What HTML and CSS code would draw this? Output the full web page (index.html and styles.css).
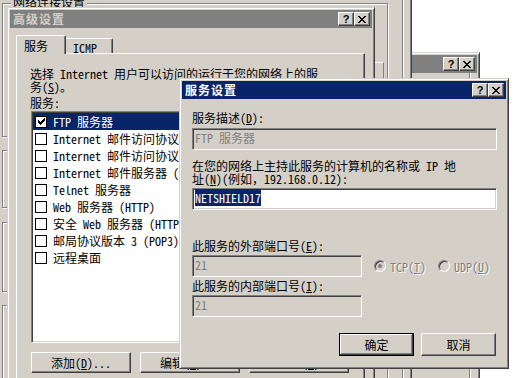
FILE: index.html
```html
<!DOCTYPE html>
<html lang="zh-CN">
<head>
    <meta charset="UTF-8">
    <title>服务设置</title>
    <link rel="stylesheet" href="styles.css">
</head>
<body>
    <!-- 右侧后面的窗口 (标题文字被遮住) -->
    <div class="win w-side">
        <div class="titlebar inactive">
            <span class="caption"></span>
            <span class="tbtn help">?</span>
            <span class="tbtn close"><svg width="8" height="7" viewBox="0 0 8 7" shape-rendering="crispEdges"><path d="M0 0h2v1h-2zM6 0h2v1h-2zM1 1h2v1h-2zM5 1h2v1h-2zM2 2h4v1h-4zM3 3h2v1h-2zM2 4h4v1h-4zM1 5h2v1h-2zM5 5h2v1h-2zM0 6h2v1h-2zM6 6h2v1h-2z"/></svg></span>
        </div>
        <div class="side-body"><div class="side-line"></div></div>
    </div>

    <!-- 网络连接设置 (最底层对话框) -->
    <div class="win w-net">
        <div class="titlebar inactive"><span class="caption"></span></div>
        <div class="net-body">
            <div class="net-groups">
                <div class="group g1">
                    <span class="group-label">网络连接设置</span>
                    <div class="g1-box"></div>
                </div>
                <div class="group g2"></div>
                <div class="group g3"></div>
                <div class="group g4"></div>
            </div>
            <div class="net-edge"></div>
        </div>
    </div>

    <!-- 高级设置 -->
    <div class="win w-adv">
        <div class="titlebar inactive">
            <span class="caption">高级设置</span>
            <span class="tbtn help">?</span>
            <span class="tbtn close"><svg width="8" height="7" viewBox="0 0 8 7" shape-rendering="crispEdges"><path d="M0 0h2v1h-2zM6 0h2v1h-2zM1 1h2v1h-2zM5 1h2v1h-2zM2 2h4v1h-4zM3 3h2v1h-2zM2 4h4v1h-4zM1 5h2v1h-2zM5 5h2v1h-2zM0 6h2v1h-2zM6 6h2v1h-2z"/></svg></span>
        </div>
        <div class="tabs">
            <div class="tab active">服务</div>
            <div class="tab">ICMP</div>
        </div>
        <div class="tabpanel">
            <p class="hint">选择 Internet 用户可以访问的运行于您的网络上的服<br>务(<u>S</u>)。</p>
            <div class="label">服务:</div>
            <ul class="listbox">
                <li class="selected"><span class="chk checked"><svg width="7" height="7" viewBox="0 0 7 7" shape-rendering="crispEdges"><path d="M6 0h1v3h-1zM5 1h1v3h-1zM4 2h1v3h-1zM3 3h1v3h-1zM2 4h1v3h-1zM1 3h1v3h-1zM0 2h1v3h-1z"/></svg></span>FTP 服务器</li>
                <li><span class="chk"></span>Internet 邮件访问协议版本 3 (IMAP3)</li>
                <li><span class="chk"></span>Internet 邮件访问协议版本 4 (IMAP4)</li>
                <li><span class="chk"></span>Internet 邮件服务器 (SMTP)</li>
                <li><span class="chk"></span>Telnet 服务器</li>
                <li><span class="chk"></span>Web 服务器 (HTTP)</li>
                <li><span class="chk"></span>安全 Web 服务器 (HTTPS)</li>
                <li><span class="chk"></span>邮局协议版本 3 (POP3)</li>
                <li><span class="chk"></span>远程桌面</li>
            </ul>
            <div class="btnrow">
                <button class="btn wide">添加(<u>D</u>)...</button>
                <button class="btn wide">编辑(<u>T</u>)...</button>
                <button class="btn wide">删除(<u>E</u>)</button>
            </div>
        </div>
    </div>

    <!-- 服务设置 -->
    <div class="win w-svc">
        <div class="titlebar">
            <span class="caption">服务设置</span>
            <span class="tbtn help">?</span>
            <span class="tbtn close"><svg width="8" height="7" viewBox="0 0 8 7" shape-rendering="crispEdges"><path d="M0 0h2v1h-2zM6 0h2v1h-2zM1 1h2v1h-2zM5 1h2v1h-2zM2 2h4v1h-4zM3 3h2v1h-2zM2 4h4v1h-4zM1 5h2v1h-2zM5 5h2v1h-2zM0 6h2v1h-2zM6 6h2v1h-2z"/></svg></span>
        </div>
        <div class="svc-body">
            <div class="label">服务描述(<u>D</u>):</div>
            <div class="edit full disabled first">FTP 服务器</div>
            <div class="label two">在您的网络上主持此服务的计算机的名称或 IP 地<br>址(<u>N</u>)(例如，192.168.0.12):</div>
            <div class="edit full host"><span class="sel">NETSHIELD17</span></div>
            <div class="label ext">此服务的外部端口号(<u>E</u>):</div>
            <div class="port-row">
                <div class="edit port disabled">21</div>
                <label class="radio-item"><span class="radio on"></span><span>TCP(<u>T</u>)</span></label>
                <label class="radio-item"><span class="radio"></span><span>UDP(<u>U</u>)</span></label>
            </div>
            <div class="label int">此服务的内部端口号(<u>I</u>):</div>
            <div class="edit port disabled last">21</div>
            <div class="actions">
                <button class="btn default">确定</button>
                <button class="btn">取消</button>
            </div>
        </div>
    </div>
</body>
</html>
```

FILE: styles.css
```css
* {
    box-sizing: border-box;
}
html, body {
    margin: 0;
    padding: 0;
}
body {
    position: relative;
    width: 520px;
    height: 378px;
    overflow: hidden;
    background: #fff;
    font-family: "Noto Sans Mono CJK SC", "Noto Sans CJK SC", sans-serif;
    font-size: 12px;
    line-height: 13px;
    color: #000;
}
u {
    text-decoration: underline;
    text-underline-offset: 1px;
}

/* windows */
.win {
    position: absolute;
    display: flex;
    flex-direction: column;
    padding: 2px;
    background: #d4d0c8;
    border: 1px solid;
    border-color: #d4d0c8 #404040 #404040 #d4d0c8;
    box-shadow: inset 1px 1px #fff, inset -1px -1px #808080;
}
.w-side { left: 300px; top: 52px; width: 180px; height: 340px; }
.w-net  { left: -6px; top: -30px; width: 418px; height: 420px; }
.w-adv  { left: 7px; top: 7px; width: 368px; height: 400px; }
.w-svc  { left: 179px; top: 78px; width: 330px; height: 291px; }

.titlebar {
    display: flex;
    align-items: center;
    flex: none;
    height: 18px;
    padding: 0 2px 0 3px;
    background: #0a246a;
    color: #fff;
    font-weight: bold;
    line-height: 18px;
}
.titlebar.inactive {
    background: #808080;
    color: #d4d0c8;
}
.caption {
    flex: 1;
    white-space: nowrap;
    letter-spacing: 1px;
}
.tbtn {
    display: flex;
    align-items: center;
    justify-content: center;
    width: 16px;
    height: 14px;
    background: #d4d0c8;
    border: 1px solid;
    border-color: #fff #404040 #404040 #fff;
    box-shadow: inset -1px -1px #808080;
    color: #000;
}
.tbtn.help {
    font: bold 11px/1 "Liberation Sans", sans-serif;
    padding-top: 1px;
}
.tbtn.close svg {
    fill: #000;
}

/* back windows */
.side-body {
    flex: 1;
    display: flex;
    justify-content: flex-end;
    padding-right: 6px;
}
.side-line {
    width: 2px;
    border-left: 1px solid #808080;
    border-right: 1px solid #fff;
}
.net-body {
    flex: 1;
    display: flex;
}
.net-groups {
    width: 386px;
    margin-left: 5px;
    padding-top: 12px;
}
.group {
    position: relative;
    border: 1px solid #808080;
    box-shadow: inset 1px 1px #fff, 1px 1px #fff;
}
.g1 {
    display: flex;
    justify-content: flex-end;
    height: 134px;
    padding: 58px 3px 0 0;
}
.g1-box {
    width: 24px;
    height: 60px;
    border: 1px solid;
    border-color: #fff #808080 #808080 #fff;
}
.g2 { height: 58px; margin-top: 13px; }
.g3 { height: 70px; margin-top: 14px; }
.g4 { height: 200px; margin-top: 13px; }
.group-label {
    position: absolute;
    top: -9px;
    left: 8px;
    padding: 0 2px;
    background: #d4d0c8;
}
.net-edge {
    margin-left: 14px;
    width: 2px;
    border-left: 1px solid #808080;
    border-right: 1px solid #fff;
}

/* tabs */
.tabs {
    display: flex;
    align-items: flex-end;
    height: 25px;
    padding-left: 6px;
    flex: none;
}
.tab {
    position: relative;
    height: 15px;
    width: 49px;
    margin-left: -2px;
    padding: 2px 0 0 8px;
    border-top: 1px solid #fff;
    border-left: 1px solid #fff;
    border-right: 1px solid #404040;
    border-radius: 2px 2px 0 0;
    box-shadow: inset -1px 0 #808080;
}
.tab.active {
    z-index: 1;
    height: 19px;
    width: 50px;
    margin-left: 0;
    margin-bottom: -1px;
    padding: 3px 0 0 7px;
    background: #d4d0c8;
}
.tabpanel {
    flex: 1;
    width: 349px;
    margin-left: 6px;
    padding: 13px 13px 0;
    border: 1px solid;
    border-color: #fff #404040 #404040 #fff;
    box-shadow: inset -1px -1px #808080;
}
.hint {
    margin: 0;
    white-space: nowrap;
}
.tabpanel .label {
    margin-top: 3px;
}
.listbox {
    list-style: none;
    margin: 2px 0 0 1px;
    padding: 1px;
    width: 320px;
    height: 232px;
    background: #fff;
    border: 1px solid;
    border-color: #808080 #fff #fff #808080;
    box-shadow: inset 1px 1px #404040, inset -1px -1px #d4d0c8;
    overflow: hidden;
}
.listbox li {
    display: flex;
    align-items: center;
    height: 17px;
    white-space: nowrap;
}
.listbox li.selected {
    background: #0a246a;
    color: #fff;
}
.chk {
    display: flex;
    align-items: center;
    justify-content: center;
    flex: none;
    width: 12px;
    height: 12px;
    margin: 0 6px 0 2px;
    background: #fff;
    border: 1px solid #000;
}
.chk svg {
    fill: #000;
}
.btnrow {
    display: flex;
    gap: 9px;
    margin: 9px 0 0 1px;
}

/* buttons */
.btn {
    width: 75px;
    height: 23px;
    padding: 0;
    font: inherit;
    color: #000;
    background: #d4d0c8;
    border: 1px solid;
    border-color: #fff #404040 #404040 #fff;
    box-shadow: inset -1px -1px #808080;
}
.btn.wide {
    width: 100px;
    height: 21px;
}
.btn.default {
    border-color: #000;
    box-shadow: inset -1px -1px #404040, inset 1px 1px #fff, inset -2px -2px #808080;
}

/* service dialog */
.svc-body {
    flex: 1;
    padding: 12px 9px 0 10px;
}
.edit {
    flex: none;
    height: 22px;
    padding: 2px;
    background: #fff;
    border: 1px solid;
    border-color: #808080 #fff #fff #808080;
    box-shadow: inset 1px 1px #404040, inset -1px -1px #d4d0c8;
    white-space: nowrap;
}
.edit.disabled {
    background: #d4d0c8;
    color: #808080;
}
.edit.full { width: 305px; }
.edit.port { width: 170px; }
.edit.first { margin-top: 4px; }
.label.two { margin-top: 9px; }
.edit.host { margin-top: 3px; }
.label.ext { margin-top: 29px; }
.port-row {
    display: flex;
    align-items: center;
    margin-top: 3px;
}
.label.int { margin-top: 2px; }
.edit.last { margin-top: 3px; }
.sel {
    background: #0a246a;
    color: #fff;
}
.radio-item {
    display: flex;
    align-items: center;
    gap: 4px;
    margin-left: 12px;
    color: #808080;
    text-shadow: 1px 1px #fff;
    white-space: nowrap;
}
.radio {
    position: relative;
    flex: none;
    width: 12px;
    height: 12px;
    border-radius: 50%;
    background: #d4d0c8;
    border: 1px solid;
    border-color: #808080 #fff #fff #808080;
    box-shadow: inset 1px 1px #404040;
}
.radio.on::after {
    content: "";
    position: absolute;
    left: 3px;
    top: 3px;
    width: 4px;
    height: 4px;
    border-radius: 50%;
    background: #808080;
}
.actions {
    display: flex;
    justify-content: flex-end;
    gap: 7px;
    margin: 16px 1px 0 0;
}
```
